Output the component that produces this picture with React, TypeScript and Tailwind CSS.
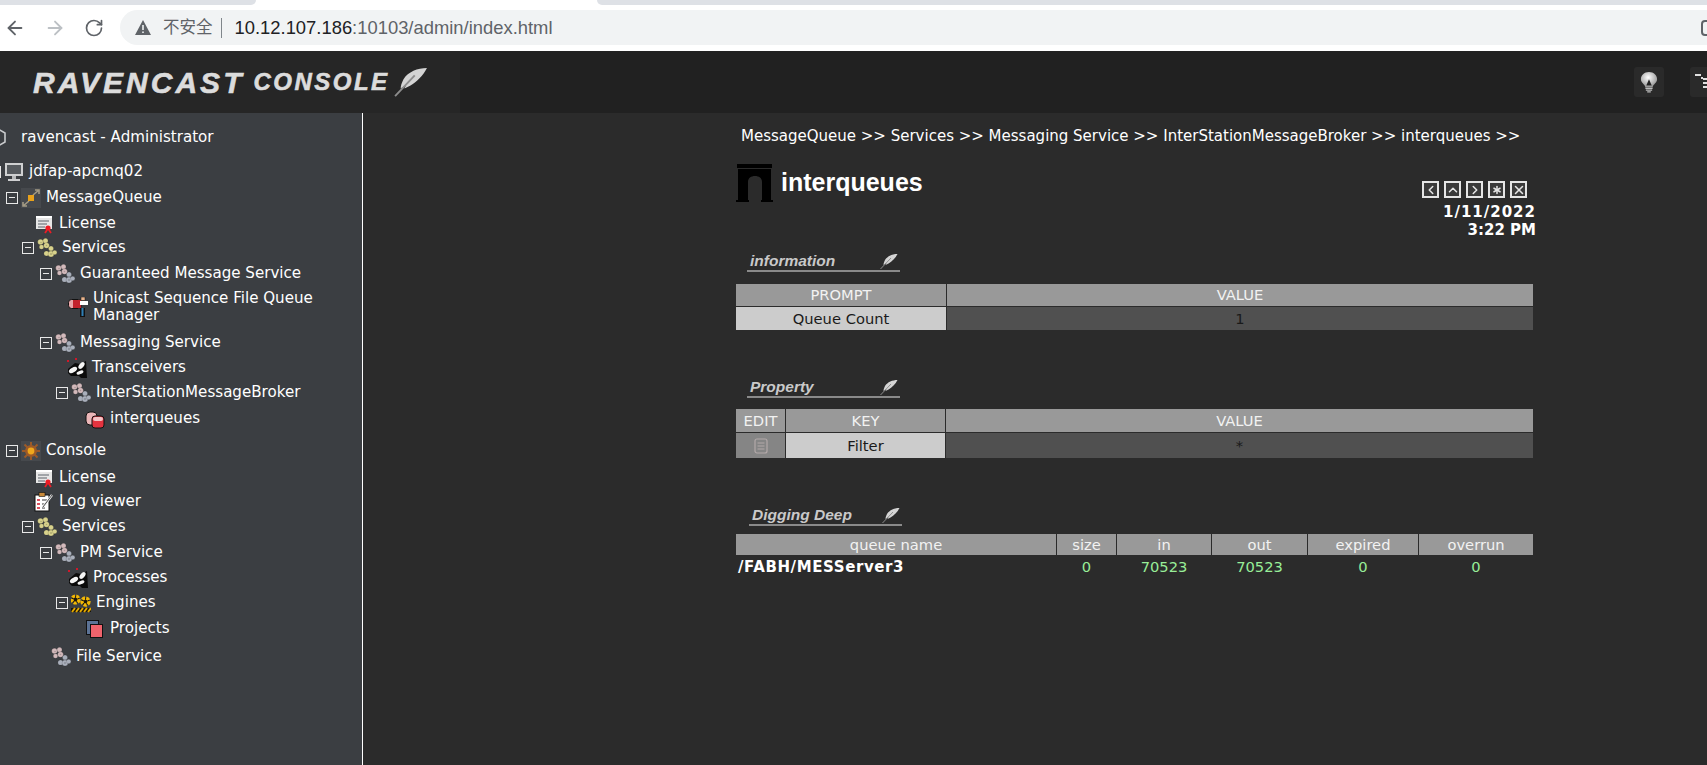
import type { ReactNode } from "react";
import { ArrowLeft, ArrowRight, Asterisk, ChevronLeft, ChevronRight, ChevronUp, RotateCw, X } from "lucide-react";

const Feather = ({ className }: { className: string }) => (
  <svg viewBox="0 0 36 32" className={className}>
    <path d="M35 1C25 1 15 5 10 13C8 17 7 20 7 23L13 19L11 23L17 20C24 16 31 9 35 1Z" fill="#d4d4d4" />
    <path d="M1 31L22 9" stroke="#8d8d8d" strokeWidth="2" />
  </svg>
);

const Gears = ({ a, b }: { a: string; b: string }) => (
  <svg viewBox="0 0 20 20" className="h-5 w-5">
    <g fill={a} stroke="#00000040" strokeWidth="0.5">
      <circle cx="3.500" cy="4" r="2.800" />
      <circle cx="8.500" cy="2.800" r="2.500" />
      <circle cx="9.500" cy="7.500" r="2.800" />
      <circle cx="4.500" cy="9" r="2.300" />
    </g>
    <g fill={b} stroke="#00000040" strokeWidth="0.5">
      <circle cx="14" cy="10.500" r="2.500" />
      <circle cx="9.500" cy="15.500" r="2.600" />
      <circle cx="14" cy="16" r="3" />
      <circle cx="17.700" cy="14.500" r="2.300" />
    </g>
    <g fill="#00000030">
      <circle cx="4" cy="4.500" r="0.800" />
      <circle cx="9.500" cy="7.500" r="0.800" />
      <circle cx="14" cy="16" r="1" />
    </g>
  </svg>
);

const Hexagon = () => (
  <svg viewBox="0 0 20 20" className="h-5 w-5">
    <path d="M2 1L9 5V14L2 18L-5 14V5Z" fill="none" stroke="#c9cbcd" strokeWidth="1.6" />
  </svg>
);

const Computer = () => (
  <svg viewBox="0 0 20 20" className="h-5 w-5">
    <rect x="1" y="1" width="18" height="13" fill="#cfd0d1" />
    <rect x="3" y="3" width="14" height="9" fill="#565a5e" />
    <rect x="8" y="14" width="4" height="3" fill="#b9babb" />
    <rect x="4" y="17" width="12" height="2" fill="#cfd0d1" />
  </svg>
);

const MqIcon = () => (
  <svg viewBox="0 0 20 20" className="h-5 w-5">
    <rect width="20" height="20" fill="#46494d" />
    <path d="M12 7L18 2M14 2H18V6M8 13L2 18M2 14V18H6" fill="none" stroke="#a39a84" strokeWidth="1.6" />
    <rect x="7" y="7" width="6" height="6" fill="#e9a21b" />
  </svg>
);

const LicenseIcon = () => (
  <svg viewBox="0 0 20 20" className="h-5 w-5">
    <rect x="2" y="2" width="16" height="13" fill="#e6e6e6" />
    <rect x="2" y="2" width="16" height="2" fill="#fff" />
    <path d="M4 7H15M4 10H13M4 13H11" stroke="#8b8f94" strokeWidth="1.4" />
    <circle cx="14" cy="14" r="2.600" fill="#ee1c25" />
    <path d="M13 16L11 19M15 16L17 19" stroke="#ee1c25" strokeWidth="1.800" />
  </svg>
);

const ManIcon = () => (
  <svg viewBox="0 0 20 20" className="h-5 w-5">
    <rect x="0.500" y="2.500" width="13" height="9" rx="3" fill="#e7a5a8" stroke="#111" />
    <rect x="5" y="3" width="8" height="8" fill="#c3222c" />
    <path d="M12 4H20V8H12Z" fill="#fff" />
    <rect x="13" y="0" width="4" height="3.500" fill="#e9b48d" stroke="#111" strokeWidth="0.500" />
    <rect x="12" y="11" width="5" height="9" fill="#111" />
    <rect x="13.500" y="11" width="2" height="8" fill="#2f7fb5" />
  </svg>
);

const SwirlIcon = () => (
  <svg viewBox="0 0 20 20" className="h-5 w-5">
    <path d="M1 11L8 5L13 6L19 3L20 20H14L12 18H4L1 15Z" fill="#0b0b0b" />
    <ellipse cx="6" cy="12" rx="4.500" ry="2.400" fill="#f5f5f5" transform="rotate(-30 6 12)" />
    <ellipse cx="14.500" cy="7.500" rx="4" ry="2.200" fill="#f5f5f5" transform="rotate(-50 14.500 7.500)" />
    <ellipse cx="13" cy="14.500" rx="3.600" ry="1.700" fill="#f5f5f5" transform="rotate(-20 13 14.500)" />
    <rect x="0" y="2" width="2" height="2" fill="#d0182a" />
    <rect x="8" y="0" width="2" height="2" fill="#d0182a" />
  </svg>
);

const QueueIcon = () => (
  <svg viewBox="0 0 20 20" className="h-5 w-5">
    <rect x="1" y="3" width="11" height="13" rx="4" fill="#eab6b8" stroke="#111" />
    <rect x="7" y="7" width="12" height="12" rx="3" fill="#e5333f" stroke="#111" />
    <rect x="8" y="8" width="10" height="4" rx="2" fill="#f5c5c7" />
  </svg>
);

const ConsoleIcon = () => (
  <svg viewBox="0 0 20 20" className="h-5 w-5">
    <rect width="20" height="20" fill="#46494d" />
    <path d="M10 1V19M1 10H19M3.500 3.500L16.500 16.500M16.500 3.500L3.500 16.500" stroke="#9c5a28" strokeWidth="2" />
    <circle cx="10" cy="10" r="6" fill="#9c5a28" />
    <circle cx="10" cy="10" r="3.400" fill="#f0a81c" />
  </svg>
);

const LogIcon = () => (
  <svg viewBox="0 0 20 20" className="h-5 w-5">
    <rect x="1" y="3" width="14" height="16" fill="#fff" stroke="#111" />
    <rect x="5" y="0.500" width="6" height="4" fill="#c98a3a" stroke="#111" strokeWidth="0.600" />
    <path d="M3 8H6M3 12H6M3 16H6" stroke="#d0182a" strokeWidth="1.500" />
    <path d="M8 8H13M8 12H12M8 16H11" stroke="#333" />
    <path d="M9 15L18 3" stroke="#f2f2f2" strokeWidth="2.400" />
    <path d="M9 15L18 3" stroke="#222" strokeWidth="0.800" />
  </svg>
);

const EnginesIcon = () => (
  <svg viewBox="0 0 20 20" className="h-5 w-5">
    <path d="M0 15H20V19H0Z" fill="#17130a" />
    <circle cx="4.500" cy="6.500" r="3.500" fill="#17130a" stroke="#f2b705" strokeWidth="3.200" strokeDasharray="3 1.200" />
    <circle cx="14.500" cy="8.500" r="3.500" fill="#17130a" stroke="#f2b705" strokeWidth="3.400" strokeDasharray="3 1.200" />
    <path d="M1 19L4 15M5 19L8 15M9 19L12 15M13 19L16 15M17 19L20 15" stroke="#e3a800" strokeWidth="2" />
  </svg>
);

const ProjectsIcon = () => (
  <svg viewBox="0 0 20 20" className="h-5 w-5">
    <rect x="1.500" y="1.500" width="12" height="14" fill="#5c7396" stroke="#111" />
    <rect x="5.500" y="5.500" width="12" height="13" fill="#f0636c" stroke="#111" />
  </svg>
);

const Bulb = () => (
  <svg viewBox="0 0 20 24" className="h-[22px] w-[18px]">
    <defs>
      <radialGradient id="bulb" cx="45%" cy="35%" r="60%">
        <stop offset="0%" stopColor="#fff" />
        <stop offset="100%" stopColor="#9a9a9a" />
      </radialGradient>
    </defs>
    <path d="M10 1C4.500 1 1 5 1 9C1 13 5 14 6 18H14C15 14 19 13 19 9C19 5 15.500 1 10 1Z" fill="url(#bulb)" />
    <path d="M10 9L7 16H13Z" fill="#222" />
    <path d="M6 19H14M6.500 21H13.500M8 23H12" stroke="#bbb" strokeWidth="1.400" />
  </svg>
);

const DocIcon = () => (
  <svg viewBox="0 0 14 16" className="h-[16px] w-[14px]">
    <rect x="1" y="1" width="12" height="14" rx="2" fill="none" stroke="#b3a9a9" strokeWidth="1.200" />
    <path d="M3.500 5H10.500M3.500 8H10.500M3.500 11H10.500" stroke="#b3a9a9" strokeWidth="1.200" />
  </svg>
);

type TreeRow = { label: string; icon: ReactNode; box?: boolean; className: string; textClass?: string };

const tree: TreeRow[] = [
  { label: "ravencast - Administrator", icon: <Hexagon />, className: "-ml-[4px]" },
  { label: "jdfap-apcmq02", icon: <Computer />, box: true, className: "mt-[9px] -ml-[11px]" },
  { label: "MessageQueue", icon: <MqIcon />, box: true, className: "mt-[1px] ml-[6px]" },
  { label: "License", icon: <LicenseIcon />, className: "mt-[1px] ml-[34px]" },
  { label: "Services", icon: <Gears a="#d8d28c" b="#d8d28c" />, box: true, className: "-mt-[1px] ml-[22px]" },
  { label: "Guaranteed Message Service", icon: <Gears a="#d2b9bb" b="#a9afbb" />, box: true, className: "mt-[1px] ml-[40px]" },
  { label: "Unicast Sequence File Queue Manager", icon: <ManIcon />, className: "ml-[68px] h-[42px]", textClass: "w-[230px] whitespace-normal" },
  { label: "Messaging Service", icon: <Gears a="#d2b9bb" b="#a9afbb" />, box: true, className: "mt-[2px] ml-[40px]" },
  { label: "Transceivers", icon: <SwirlIcon />, className: "ml-[67px]" },
  { label: "InterStationMessageBroker", icon: <Gears a="#d2b9bb" b="#a9afbb" />, box: true, className: "ml-[56px]" },
  { label: "interqueues", icon: <QueueIcon />, className: "mt-[1px] ml-[85px]" },
  { label: "Console", icon: <ConsoleIcon />, box: true, className: "mt-[7px] ml-[6px]" },
  { label: "License", icon: <LicenseIcon />, className: "mt-[2px] ml-[34px]" },
  { label: "Log viewer", icon: <LogIcon />, className: "-mt-[1px] ml-[34px]" },
  { label: "Services", icon: <Gears a="#d8d28c" b="#d8d28c" />, box: true, className: "ml-[22px]" },
  { label: "PM Service", icon: <Gears a="#d2b9bb" b="#a9afbb" />, box: true, className: "mt-[1px] ml-[40px]" },
  { label: "Processes", icon: <SwirlIcon />, className: "ml-[68px]" },
  { label: "Engines", icon: <EnginesIcon />, box: true, className: "ml-[56px]" },
  { label: "Projects", icon: <ProjectsIcon />, className: "mt-[1px] ml-[85px]" },
  { label: "File Service", icon: <Gears a="#d2b9bb" b="#a9afbb" />, className: "mt-[3px] ml-[51px]" },
];

const SectionTitle = ({ title, className }: { title: string; className: string }) => (
  <div className={`flex h-[20px] w-[153px] items-center justify-between border-b-2 border-[#8a8a8a] pl-[3px] pr-[2px] ${className}`}>
    <span className="font-['Liberation_Sans',sans-serif] text-[15.5px] font-bold italic text-[#c9c9c9]">{title}</span>
    <Feather className="h-[17px] w-[18px]" />
  </div>
);

const Head = ({ children }: { children: ReactNode }) => (
  <div className="flex items-center justify-center bg-[#999999] text-[#f2f2f2]">{children}</div>
);

const Cell = ({ children, className }: { children: ReactNode; className: string }) => (
  <div className={`flex items-center justify-center ${className}`}>{children}</div>
);

const navIcons = [ChevronLeft, ChevronUp, ChevronRight, Asterisk, X];

const deepHeads = ["queue name", "size", "in", "out", "expired", "overrun"];
const deepValues = ["0", "70523", "70523", "0", "0"];

export default function App() {
  return (
    <div className="flex h-[765px] w-[1707px] flex-col overflow-hidden bg-white font-['DejaVu_Sans',sans-serif] text-[14.7px]">
      {/* browser chrome */}
      <div className="flex h-[5px]">
        <div className="w-[256px] rounded-br-lg bg-[#dee1e6]" />
        <div className="w-[341px]" />
        <div className="flex-1 rounded-bl-lg bg-[#dee1e6]" />
      </div>
      <div className="flex h-[46px] items-start pl-[4px] pt-[5px]">
        <div className="flex h-[35px] items-center">
          <ArrowLeft size={22} className="text-[#5f6368]" />
          <ArrowRight size={22} className="ml-[18px] text-[#bcc0c4]" />
          <RotateCw size={20} className="ml-[18px] text-[#5f6368]" />
        </div>
        <div className="ml-[16px] flex h-[35px] flex-1 items-center rounded-l-full bg-[#f1f3f4] pl-[15px] font-['Liberation_Sans','Noto_Sans_CJK_SC',sans-serif] text-[18.4px] text-[#5f6368]">
          <svg viewBox="0 0 16 15" className="h-[15px] w-[16px]">
            <path d="M8 0L16 15H0Z" fill="#5f6368" />
            <path d="M8 5V10M8 11.500V13" stroke="#f1f3f4" strokeWidth="1.600" />
          </svg>
          <span className="ml-[12px] text-[16.5px]">不安全</span>
          <span className="ml-[8px] h-[20px] w-px bg-[#80868b]" />
          <span className="ml-[13px] text-[#202124]">10.12.107.186</span>
          <span>:10103/admin/index.html</span>
          <span className="-mr-[10px] ml-auto h-[16px] w-[16px] rounded-[4px] border-2 border-[#5f6368]" />
        </div>
      </div>

      {/* console header */}
      <div className="flex h-[62px] items-center bg-[#212121]">
        <div className="flex h-full w-[460px] items-center bg-[#262626] pl-[33px] font-['Liberation_Sans',sans-serif] font-bold italic text-[#dcdcdc] [-webkit-text-stroke:0.6px_#dcdcdc]">
          <span className="text-[30px] tracking-[3px]">RAVENCAST</span>
          <span className="ml-[9px] text-[24px] tracking-[2.5px]">CONSOLE</span>
          <Feather className="ml-[2px] h-[30px] w-[38px]" />
        </div>
        <div className="ml-auto flex h-[30px] w-[30px] items-center justify-center rounded-[3px] bg-[#2a2a2a]">
          <Bulb />
        </div>
        <div className="-mr-[13px] ml-[26px] flex h-[30px] w-[30px] shrink-0 items-start rounded-[3px] bg-[#2a2a2a] pl-[5px] pt-[7px]">
          <svg viewBox="0 0 14 16" className="h-[16px] w-[14px]">
            <path d="M0 1H6M6 4H8M8 5H14M8 9H14M8 13H14" stroke="#e0e0e0" strokeWidth="2" />
          </svg>
        </div>
      </div>

      <div className="flex flex-1 bg-[#2b2b2b] text-white">
        {/* tree */}
        <aside className="w-[363px] shrink-0 overflow-hidden border-r-[1.5px] border-white bg-[#3b3e42] pt-[12px] text-[15.1px]">
          {tree.map((row, i) => (
            <div key={i} className={`flex h-[25px] items-center whitespace-nowrap ${row.className}`}>
              {row.box && (
                <span className="mr-[3px] flex h-[12px] w-[12px] shrink-0 items-center justify-center border-[1.5px] border-[#e8e8e8]">
                  <span className="h-[1.5px] w-[6px] bg-[#e8e8e8]" />
                </span>
              )}
              <span className="mr-[5px] shrink-0">{row.icon}</span>
              <span className={`leading-[17px] ${row.textClass ?? ""}`}>{row.label}</span>
            </div>
          ))}
        </aside>

        {/* content */}
        <main className="pl-[373px] pt-[13px]">
          <div className="w-[798px]">
            <div className="ml-[5px] h-[20px] whitespace-nowrap text-[15px] leading-[20px]">
              MessageQueue &gt;&gt; Services &gt;&gt; Messaging Service &gt;&gt; InterStationMessageBroker &gt;&gt; interqueues &gt;&gt;
            </div>

            <div className="mt-[18px] flex h-[75px] justify-between">
              <div className="flex items-start">
                <svg viewBox="0 0 37 38" className="h-[38px] w-[37px]">
                  <path d="M1 0H36V4H1ZM3 5H35V36H37V38H25V36H26V18C26 14 23 12 19 12C15 12 12 14 12 18V36H13V38H0V36H2V5Z" fill="#000" />
                </svg>
                <span className="ml-[8px] font-['Liberation_Sans',sans-serif] text-[25px] font-bold leading-[36px]">interqueues</span>
              </div>
              <div className="flex flex-col items-end pt-[17px]">
                <div className="mr-[7px] flex gap-[5px]">
                  {navIcons.map((Icon, i) => (
                    <span key={i} className="flex h-[17px] w-[17px] items-center justify-center border-2 border-[#e5e5e5] bg-[#3a3a3a]">
                      <Icon size={14} strokeWidth={2.6} className="shrink-0 text-[#e5e5e5]" />
                    </span>
                  ))}
                </div>
                <div className="mr-[-2px] mt-[5px] text-right text-[15px] font-bold leading-[18px]">
                  <div className="tracking-[1px]">1/11/2022</div>
                  <div>3:22 PM</div>
                </div>
              </div>
            </div>

            <SectionTitle title="information" className="ml-[11px] mt-[13px]" />
            <div className="mt-[12px] grid grid-cols-[210px_586px] gap-px">
              <div className="contents">
                <Head>PROMPT</Head>
                <Head>VALUE</Head>
              </div>
              <Cell className="h-[23px] bg-[#cccccc] text-[#1a1a1a]">Queue Count</Cell>
              <Cell className="h-[23px] bg-[#505050] text-[#1a1a1a]">1</Cell>
            </div>

            <SectionTitle title="Property" className="ml-[11px] mt-[48px]" />
            <div className="mt-[11px] grid grid-cols-[49px_159px_587px] gap-px [grid-template-rows:23px_25px]">
              <Head>EDIT</Head>
              <Head>KEY</Head>
              <Head>VALUE</Head>
              <Cell className="bg-[#858585]">
                <DocIcon />
              </Cell>
              <Cell className="bg-[#cccccc] text-[#1a1a1a]">Filter</Cell>
              <Cell className="bg-[#505050] text-[#1a1a1a]">*</Cell>
            </div>

            <SectionTitle title="Digging Deep" className="ml-[13px] mt-[48px]" />
            <div className="mt-[8px] grid grid-cols-[320px_59px_94px_95px_110px_114px] gap-x-px [grid-template-rows:21px_24px]">
              {deepHeads.map((h) => (
                <Head key={h}>{h}</Head>
              ))}
              <div className="flex items-center pl-[2px] text-[15px] font-bold tracking-[0.6px]">/FABH/MESServer3</div>
              {deepValues.map((v, i) => (
                <Cell key={i} className="text-[#98ee98]">
                  {v}
                </Cell>
              ))}
            </div>
          </div>
        </main>
      </div>
    </div>
  );
}
